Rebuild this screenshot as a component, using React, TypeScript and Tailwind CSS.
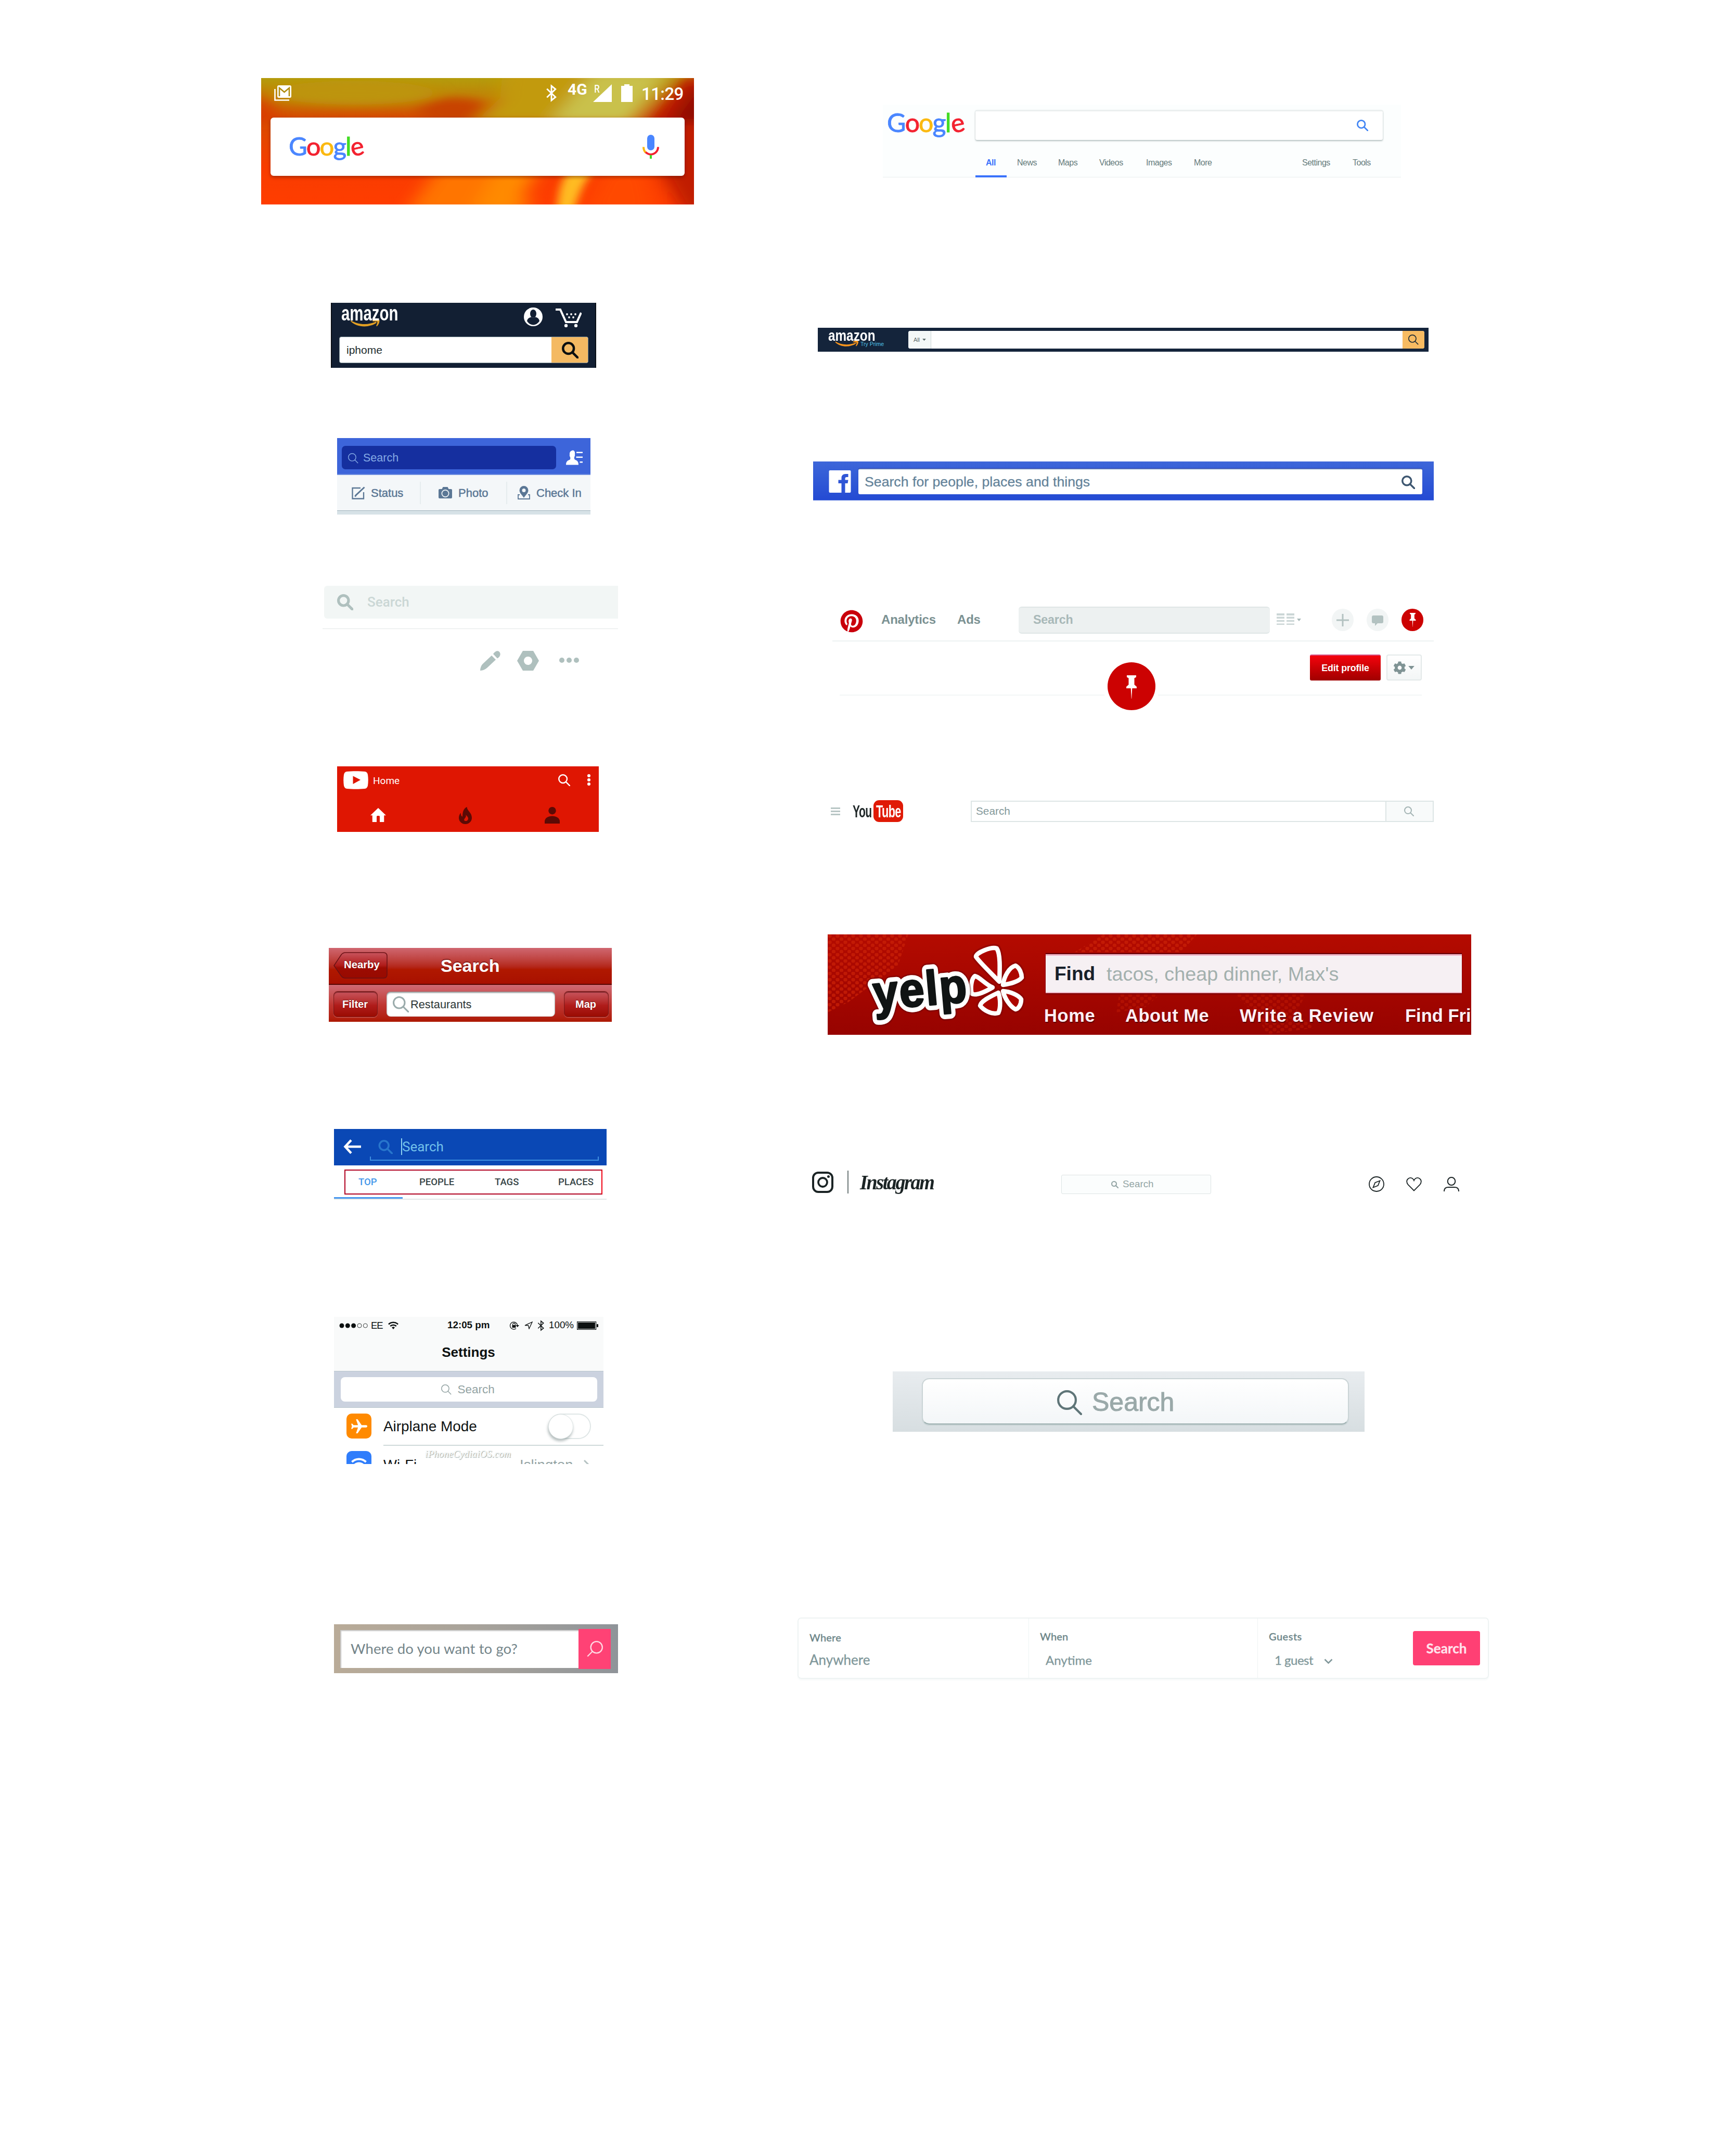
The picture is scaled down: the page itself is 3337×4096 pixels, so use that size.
import type { ReactNode } from "react";
import { FaPinterest, FaCog } from "react-icons/fa";

const SANS = "font-['Liberation_Sans',Arial,sans-serif]";

function Magnifier({ className, sw }: { className: string; sw: number }) {
  const r = 9.5 - sw / 2;
  const edge = 9.5 + r * 0.72;
  return (
    <svg viewBox="0 0 24 24" className={className} fill="none" stroke="currentColor" strokeWidth={sw}>
      <circle cx="9.5" cy="9.5" r={r} />
      <path d={`M${edge} ${edge}L23 23`} strokeLinecap={sw > 2 ? "round" : "butt"} />
    </svg>
  );
}

function Bluetooth({ className, sw }: { className: string; sw: number }) {
  return (
    <svg viewBox="0 0 20 33" className={className} fill="none" stroke="currentColor" strokeWidth={sw}>
      <path d="M2 8.500L18 24L10.500 30V3L18 9L2 24.500" />
    </svg>
  );
}

function GoogleLogo({ className }: { className: string }) {
  return (
    <div className={"flex font-['Lato',sans-serif] leading-none [-webkit-text-stroke-width:0.9px] " + className}>
      <span className="text-[#4a86ff]">G</span>
      <span className="text-[#f32230]">o</span>
      <span className="text-[#fbb910]">o</span>
      <span className="text-[#4a86ff]">g</span>
      <span className="text-[#42dc24]">l</span>
      <span className="inline-block -rotate-12 text-[#f32230]">e</span>
    </div>
  );
}

function Smile({ className }: { className: string }) {
  return (
    <svg viewBox="0 0 60 16" className={className} fill="currentColor">
      <path d="M1 2C15 11 36 12 52 4.500L53.500 7C38 17.500 13 17 0 3.500Z" />
      <path d="M45 2.500C50 0 56-.5 59 1C60 5 58 10 54 14L52.500 13C54 10 55.500 6 54.500 4.500C52 3.500 49 4 45.500 4Z" />
    </svg>
  );
}

function Pin({ className }: { className: string }) {
  return (
    <svg viewBox="0 0 22 45" className={className} fill="#fff">
      <path d="M2 0H20V3.500L16.500 5.500V18L21 22V25H1V22L5.500 18V5.500L2 3.500Z" />
      <path d="M9.700 25H12.300L11.200 45H10.800Z" />
    </svg>
  );
}

function Caret({ className }: { className: string }) {
  return (
    <svg viewBox="0 0 10 6" className={className} fill="currentColor">
      <path d="M0 0H10L5 6Z" />
    </svg>
  );
}

/* ---------- mobile column ---------- */

function GoogleMobile() {
  return (
    <section className="relative mt-[150px] ml-[502px] h-[243px] w-[832px] overflow-hidden bg-[#e24a00]">
      <svg viewBox="0 0 1539 945" preserveAspectRatio="none" className="absolute inset-0 h-full w-full">
        <defs>
          <linearGradient id="wall" x1="0" y1="0" x2="0" y2="1">
            <stop offset="0" stopColor="#b49c0c" />
            <stop offset=".14" stopColor="#bf8406" />
            <stop offset=".3" stopColor="#d44e00" />
            <stop offset=".7" stopColor="#f83c00" />
            <stop offset="1" stopColor="#ff3d00" />
          </linearGradient>
          <filter id="soft" x="-30%" y="-30%" width="160%" height="160%">
            <feGaussianBlur stdDeviation="34" />
          </filter>
          <filter id="softer" x="-50%" y="-50%" width="200%" height="200%">
            <feGaussianBlur stdDeviation="16" />
          </filter>
        </defs>
        <rect width="1539" height="945" fill="url(#wall)" />
        <g filter="url(#soft)">
          <ellipse cx="330" cy="110" rx="290" ry="90" fill="#bd9408" />
          <ellipse cx="690" cy="250" rx="130" ry="100" fill="#c84200" />
          <path d="M0 60L60 330H-60Z" fill="#da3a00" />
          <path d="M860-80H1480L1320 330H760L850 150Z" fill="#c29a10" />
          <path d="M1180-40H1440L1320 330H1030Z" fill="#c9c14c" />
          <path d="M1500-20L1620 0V1000H1500L1420 700L1350 330Z" fill="#c01c00" />
          <path d="M1539 60L1600 60V330H1450Z" fill="#8f0a00" />
          <path d="M520 1000L620 700H920L960 1000Z" fill="#ff7400" />
          <path d="M750 1000L830 700H980L900 1000Z" fill="#ff8a00" />
          <path d="M1150 1000L1220 700H1370L1400 1000Z" fill="#ff4a00" />
        </g>
        <path d="M1050 1000C1060 850 1060 800 1090 700H1180C1140 800 1130 880 1110 1000Z" fill="#ffbb20" filter="url(#softer)" />
      </svg>
      <div className="relative flex h-[76px] items-start text-white">
        <svg viewBox="0 0 33 30" className="mt-[14px] ml-[25px] h-[30px] w-[33px]" fill="none">
          <path d="M1.500 7V28.500H29" stroke="#fff" strokeWidth="2.600" />
          <rect x="6" y="0" width="27" height="24" rx="3" fill="#fff" />
          <path d="M10 21V5L19.500 13L29 5V21" stroke="#b08c10" strokeWidth="2.600" />
        </svg>
        <Bluetooth className="mt-[12px] ml-[489px] h-[34px] w-[21px]" sw={2.8} />
        <span className="mt-[7px] ml-[21px] w-[49px] font-['Roboto',sans-serif] text-[30px] leading-[29px] font-bold">4G</span>
        <div className="relative mt-[12px] h-[34px] w-[36px]">
          <svg viewBox="0 0 36 34" className="h-full w-full" fill="#fff">
            <path d="M36 0V34H0Z" />
          </svg>
          <span className="absolute -top-[1px] left-[2px] font-['Roboto',sans-serif] text-[20px] leading-[20px] font-medium tracking-[-1px]">
            <span className="inline-block origin-left scale-x-[0.85]">R</span>
          </span>
        </div>
        <svg viewBox="0 0 22 34" className="mt-[12px] ml-[18px] h-[34px] w-[22px]" fill="#fff">
          <path d="M6 0H16V3H22V34H0V3H6Z" />
        </svg>
        <span className="mt-[14px] ml-[17px] font-['Roboto',sans-serif] text-[33px] leading-[33px] font-medium tracking-[-0.6px]">11:29</span>
      </div>
      <div className="relative ml-[18px] flex h-[112px] w-[796px] items-center rounded-[6px] bg-white shadow-[0_3px_6px_rgba(80,20,0,0.45)]">
        <GoogleLogo className="mt-[-4px] ml-[35px] w-[680px] text-[49px] tracking-[-2px]" />
        <svg viewBox="0 0 32 46" className="h-[46px] w-[32px]" fill="none">
          <rect x="9" y="0" width="14" height="30" rx="7" fill="#4a86ff" />
          <path d="M2 23.500C2 28 3.500 31.500 6 34" stroke="#fbb910" strokeWidth="4" />
          <path d="M6 33.500C13 39.500 20 38.500 25 34.500C28.500 31.500 30 28 30 23.500" stroke="#f32230" strokeWidth="4" />
          <path d="M16 39V46" stroke="#42dc24" strokeWidth="4" />
        </svg>
      </div>
    </section>
  );
}

function AmazonMobile() {
  return (
    <section className="mt-[189px] ml-[636px] h-[125px] w-[510px] border-x-2 border-[#0a0f16] bg-[#121f33]">
      <div className="flex h-[65px] items-start">
        <div className="mt-[5px] ml-[18px] flex h-[46px] w-[350px] flex-col">
          <span className="h-[30px] w-[110px] origin-left scale-x-[0.735] text-[40px] leading-[30px] font-bold text-white">amazon</span>
          <Smile className="mt-[-3px] ml-[16px] h-[15px] w-[60px] text-[#e2a023]" />
        </div>
        <svg viewBox="0 0 36 36" className="mt-[9px] ml-[1px] h-[36px] w-[36px]">
          <circle cx="18" cy="18" r="18" fill="#fff" />
          <ellipse cx="18" cy="12" rx="6" ry="8" fill="#121f33" />
          <path d="M6 26C7 20 13 18.500 15 18.500C17 20.500 19 20.500 21 18.500C24 18.500 29 20 30 26C27 31 22 33.500 18 33.500S9 31 6 26Z" fill="#121f33" />
        </svg>
        <svg viewBox="0 0 50 37" className="mt-[10px] ml-[25px] h-[37px] w-[50px]" fill="none" stroke="#fff" strokeWidth="4">
          <path d="M0 3H9L20 27H41L49 9" />
          <g fill="#fff" stroke="none">
            <circle cx="20" cy="34" r="3.200" />
            <circle cx="39" cy="34" r="3.200" />
            <circle cx="22" cy="12" r="1.900" />
            <circle cx="30" cy="12" r="1.900" />
            <circle cx="38" cy="12" r="1.900" />
            <circle cx="26" cy="18" r="1.900" />
            <circle cx="34" cy="18" r="1.900" />
          </g>
        </svg>
      </div>
      <div className="ml-[14px] flex h-[51px] w-[479px] items-stretch overflow-hidden rounded-[4px] border border-[#7d9096] bg-white">
        <div className="flex w-[407px] items-center pl-[13px] text-[21px] text-[#1c2c2d]">iphome</div>
        <div className="flex w-[71px] items-center justify-center bg-[#f4b962]">
          <Magnifier className="ml-[0px] h-[32px] w-[32px] text-[#0c0f10]" sw={3.4} />
        </div>
      </div>
    </section>
  );
}

function FacebookAction({ icon, label, className }: { icon: ReactNode; label: string; className: string }) {
  return (
    <div className={"flex h-[43px] items-center text-[22px] text-[#5b7795] [-webkit-text-stroke:0.5px_#5b7795] " + className}>
      {icon}
      <span>{label}</span>
    </div>
  );
}

function FacebookMobile() {
  return (
    <section className="mt-[135px] ml-[648px] h-[147px] w-[487px] bg-[#f4f7f9]">
      <div className="flex h-[71px] items-start border-b-2 border-[#6d8ddf] bg-[#3d65da] pt-[15px]">
        <div className="ml-[9px] flex h-[45px] w-[412px] items-center rounded-[7px] bg-[#152f9f] pl-[12px] text-[#84a9e4]">
          <Magnifier className="mt-[2px] h-[20px] w-[20px]" sw={1.7} />
          <span className="mt-[1px] ml-[9px] text-[21.500px]">Search</span>
        </div>
        <svg viewBox="0 0 32 28" className="mt-[8px] ml-[19px] h-[29px] w-[32px]" fill="#fff">
          <path d="M13 0C17 .5 17.500 4 17 8.500C17.500 10 16.500 11.500 16 13C15.500 15 16 17 17 18C20.500 19.500 24 20.500 24 28H0C0 20.500 4 19.500 7.500 18C8.500 17 8.500 15 8 13C7 11.500 6.500 10 7 8.500C6.500 3 9 1 13 0Z" />
          <path d="M20 3H32V5.500H20ZM19.500 12H32V14.500H19.500ZM26.500 21.500H32V24H26.500Z" />
        </svg>
      </div>
      <div className="flex h-[68px] items-center">
        <FacebookAction
          className="w-[161px] border-r-2 border-[#e6ecee] pl-[28px]"
          label="Status"
          icon={
            <svg viewBox="0 0 26 25" className="mr-[11px] h-[25px] w-[26px]" fill="none" stroke="currentColor" strokeWidth="2.300">
              <path d="M17 3H1.500V23.500H23V11" />
              <path d="M24.500 1.500L8 17L6.500 19.500" strokeWidth="3" />
            </svg>
          }
        />
        <FacebookAction
          className="w-[166px] border-r-2 border-[#e6ecee] pl-[34px]"
          label="Photo"
          icon={
            <svg viewBox="0 0 26 22" className="mr-[12px] h-[22px] w-[26px]" fill="currentColor" stroke="none">
              <path fillRule="evenodd" d="M2 4H6.500L8.500 0H17.500L19.500 4H24A2 2 0 0 1 26 6V20A2 2 0 0 1 24 22H2A2 2 0 0 1 0 20V6A2 2 0 0 1 2 4ZM13 5A7.500 7.500 0 1 0 13 20A7.500 7.500 0 0 0 13 5Z" />
              <circle cx="13" cy="12.500" r="5.800" />
            </svg>
          }
        />
        <FacebookAction
          className="w-[155px] pl-[20px]"
          label="Check In"
          icon={
            <svg viewBox="0 0 24 26" className="mr-[12px] h-[26px] w-[24px]" fill="currentColor" stroke="none">
              <path fillRule="evenodd" d="M12 0A8.500 8.500 0 0 1 20.500 8.500C20.500 14 14.500 18 12 23C9.500 18 3.500 14 3.500 8.500A8.500 8.500 0 0 1 12 0ZM12 5A3.500 3.500 0 1 0 12 12A3.500 3.500 0 0 0 12 5Z" />
              <path d="M4 17H1V25H23V17H20" fill="none" stroke="currentColor" strokeWidth="1.800" />
            </svg>
          }
        />
      </div>
      <div className="h-[8px] border-t border-[#9fb3bb] bg-[#d7e2e7]" />
    </section>
  );
}

function PinterestMobile() {
  return (
    <section className="mt-[137px] ml-[620px] h-[164px] w-[568px] text-[#afc0be]">
      <div className="ml-[3px] flex h-[63px] items-center rounded-l-[6px] bg-[#f2f6f5]">
        <Magnifier className="ml-[25px] h-[31px] w-[31px]" sw={4} />
        <span className="ml-[27px] font-['Roboto',sans-serif] text-[26px] font-medium text-[#cbd7d5]">Search</span>
      </div>
      <div className="mt-[19px] h-px bg-[#e3e8e8]" />
      <div className="mt-[41px] flex h-[39px] items-center">
        <svg viewBox="0 0 39 38" className="ml-[303px] h-[38px] w-[39px]" fill="currentColor">
          <path d="M22 9L30 17L14 32C11 35 5 38 0 38C0 33 2 28 5 25Z" />
          <path d="M25 6C29 0 34-1 37 2C40 6 39 11 33 14.500Z" />
        </svg>
        <svg viewBox="0 0 42 38" className="ml-[32px] h-[38px] w-[42px]" fill="currentColor" fillRule="evenodd">
          <path d="M11 0H31L42 19L31 38H11L0 19ZM21 11A8 8 0 1 0 21 27A8 8 0 0 0 21 11Z" />
        </svg>
        <div className="mt-[-2px] ml-[39px] flex gap-[4px]">
          <i className="h-[10px] w-[10px] rounded-full bg-current" />
          <i className="h-[10px] w-[10px] rounded-full bg-current" />
          <i className="h-[10px] w-[10px] rounded-full bg-current" />
        </div>
      </div>
    </section>
  );
}

function YouTubeMobile() {
  return (
    <section className="mt-[183px] ml-[648px] h-[126px] w-[503px] bg-[#df1602] text-white">
      <div className="flex h-[52px] items-center">
        <svg viewBox="0 0 48 35" className="ml-[12px] h-[35px] w-[48px]">
          <path d="M7 1C17 0 31 0 41 1Q46 1.500 47 7Q48.500 17 47 28Q46 33.500 41 34C31 35 17 35 7 34Q2 33.500 1 28Q-.5 17 1 7Q2 1.500 7 1Z" fill="#fff" />
          <path d="M18.500 9.500L33 17L18.500 25Z" fill="#df1602" />
        </svg>
        <span className="mt-[5px] ml-[9px] w-[356px] font-['Roboto',sans-serif] text-[19px]">Home</span>
        <Magnifier className="ml-[0px] h-[23px] w-[23px]" sw={2.6} />
        <div className="ml-[33px] flex flex-col gap-[2px]">
          <i className="h-[6px] w-[6px] rounded-full bg-white" />
          <i className="h-[6px] w-[6px] rounded-full bg-white" />
          <i className="h-[6px] w-[6px] rounded-full bg-white" />
        </div>
      </div>
      <div className="flex h-[74px] items-start pt-[26px] text-[#5c0a05]">
        <svg viewBox="2 3 20 17" preserveAspectRatio="none" className="mt-[2px] ml-[64px] h-[27px] w-[30px] text-white" fill="currentColor">
          <path d="M10 20v-6.500q0-1 1-1h2q1 0 1 1V20h5.500v-8H22L12 3 2 12h2.500v8z" />
        </svg>
        <svg viewBox="4 0 16 22" preserveAspectRatio="none" className="ml-[140px] h-[33px] w-[25px]" fill="currentColor" fillRule="evenodd">
          <path d="M14 0C14 5 20 7 20 14A8 8 0 0 1 4 14C4 11.500 5 9 6.500 7.500C6.300 10 7 12 8.500 12.500C8.500 8 9 2.500 14 0ZM12.500 10C13.500 13 11.500 14 10.500 16C10.500 17.500 11 18 12 18C14 18.500 15.800 16.500 15.500 14.500C15.300 12.500 13.500 11.500 12.500 10Z" />
        </svg>
        <svg viewBox="0 0 29 32" className="ml-[140px] h-[32px] w-[29px]" fill="currentColor">
          <circle cx="14.500" cy="7.200" r="7.200" />
          <path d="M0 32V27C1 21 7 17.500 14.500 17.500S28 21 29 27V32Z" />
        </svg>
      </div>
    </section>
  );
}

const YELP_BTN =
  "flex items-center justify-center rounded-[8px] border border-[#7c1a1a] bg-linear-to-b from-[#c8545d] via-[#b01c1a] via-55% to-[#9a0b02] text-[20px] font-bold text-white shadow-[0_1px_1px_rgba(255,170,170,0.5),inset_0_2px_1px_rgba(60,0,0,0.5)] [text-shadow:0_-1px_1px_rgba(60,0,0,0.6)]";

function YelpMobile() {
  return (
    <section className="mt-[223px] ml-[632px] h-[142px] w-[544px]">
      <div className="flex h-[71px] items-start border-b-2 border-[#5a0500] bg-linear-to-b from-[#cf6670] via-[#b01800] via-60% to-[#a81000]">
        <div className="relative mt-[8px] ml-[9px] h-[51px] w-[104px]">
          <svg viewBox="0 0 104 51" className="absolute inset-0 h-full w-full">
            <defs>
              <linearGradient id="nearby" x1="0" y1="0" x2="0" y2="1">
                <stop offset="0" stopColor="#c8545d" />
                <stop offset=".5" stopColor="#b01c1a" />
                <stop offset=".6" stopColor="#9c0b02" />
                <stop offset="1" stopColor="#980a00" />
              </linearGradient>
            </defs>
            <path d="M1 26L15 5Q18 1 23 1H96Q103 1 103 8V43Q103 50 96 50H23Q18 50 15 46Z" fill="url(#nearby)" stroke="#6a1014" strokeWidth="1.500" />
          </svg>
          <span className="relative block pl-[20px] text-[20.300px] leading-[49px] font-bold text-white [text-shadow:0_-1px_1px_rgba(60,0,0,0.6)]">Nearby</span>
        </div>
        <span className="ml-[102px] text-[34px] leading-[69px] font-bold text-white [text-shadow:0_-2px_1px_rgba(80,0,0,0.5)]">Search</span>
      </div>
      <div className="flex h-[71px] items-start bg-linear-to-b from-[#cf6a74] via-[#bf3530] via-55% to-[#ad1800] pt-[12px]">
        <div className={"ml-[9px] h-[50px] w-[85px] pr-[2px] " + YELP_BTN}>Filter</div>
        <div className="mt-[1px] ml-[17px] flex h-[48px] w-[324px] items-center rounded-[8px] bg-white shadow-[inset_0_2px_3px_rgba(60,70,70,0.6),inset_0_0_2px_rgba(60,70,70,0.4)]">
          <Magnifier className="ml-[12px] h-[31px] w-[31px] text-[#9aabab]" sw={2.4} />
          <span className="mt-[2px] ml-[3px] text-[21.800px] text-[#2c3636]">Restaurants</span>
        </div>
        <div className={"ml-[17px] h-[50px] w-[86px] pr-[2px] " + YELP_BTN}>Map</div>
      </div>
    </section>
  );
}

function InstagramMobile() {
  return (
    <section className="mt-[206px] ml-[642px] h-[136px] w-[524px] bg-white">
      <div className="flex h-[70px] items-start bg-[#0a48b5]">
        <svg viewBox="0 0 34 28" className="mt-[20px] ml-[18px] h-[28px] w-[34px]" fill="none" stroke="#fff" strokeWidth="4.500">
          <path d="M34 14H4M15 1.500L3.500 14L15 26.500" />
        </svg>
        <div className="ml-[17px] flex h-[60px] w-[440px] flex-col">
          <div className="mt-[17px] flex h-[34px] items-center">
            <Magnifier className="ml-[16px] h-[27px] w-[28px] text-[#2876cc]" sw={3.2} />
            <i className="ml-[16px] h-[32px] w-[2px] bg-[#8ed2ef]" />
            <span className="font-['Roboto',sans-serif] text-[26px] leading-[34px] text-[#72c0ea]">Search</span>
          </div>
          <div className="mt-[2px] h-[8px] border-x-2 border-b-2 border-[#3f8fe0]" />
        </div>
      </div>
      <div className="mt-[8px] ml-[20px] flex h-[48px] w-[496px] items-center border-2 border-[#b00020] border-r-[#f00012] pt-[2px] font-['Roboto',sans-serif] text-[18.500px] font-medium text-[#364446]">
        <span className="ml-[25px] w-[117px] text-[#4497ea]">TOP</span>
        <span className="w-[145px]">PEOPLE</span>
        <span className="w-[122px]">TAGS</span>
        <span>PLACES</span>
      </div>
      <div className="mt-[5px] h-[3px] w-[132px] bg-[#4696ee]" />
      <div className="h-[2px] bg-[#e2e8e8]" />
    </section>
  );
}

function IosSettings() {
  return (
    <section className="mt-[225px] ml-[642px] h-[283px] w-[518px] overflow-hidden bg-white text-[#0d1111]">
      <div className="h-[104px] bg-[#f9fafa]">
        <div className="flex h-[33px] items-center">
          <svg viewBox="0 0 56 10" className="ml-[10px] h-[10px] w-[56px]" fill="currentColor">
            <circle cx="5" cy="5" r="4.500" />
            <circle cx="16.300" cy="5" r="4.500" />
            <circle cx="27.600" cy="5" r="4.500" />
            <circle cx="39" cy="5" r="4" fill="none" stroke="currentColor" strokeWidth=".8" />
            <circle cx="50.300" cy="5" r="4" fill="none" stroke="currentColor" strokeWidth=".8" />
          </svg>
          <span className="ml-[5px] w-[26px] text-[18.500px] tracking-[-1px]">EE</span>
          <svg viewBox="0 0 20 15" className="ml-[7px] h-[15px] w-[20px]" fill="none" stroke="currentColor" strokeWidth="2.600">
            <path d="M1 5.500C6 .5 14 .5 19 5.500M4.200 9C7.500 6 12.500 6 15.800 9" />
            <path d="M7 11.500Q10 9 13 11.500L10 15Z" fill="currentColor" stroke="none" />
          </svg>
          <span className="ml-[94px] w-[119px] text-[18.800px] font-bold">12:05 pm</span>
          <svg viewBox="0 0 19 16" className="h-[16px] w-[19px]" fill="none" stroke="currentColor" strokeWidth="1.300">
            <path d="M13 13.500A7 7 0 1 1 15.500 7" />
            <path d="M12.500 7H19L15.700 11Z" fill="currentColor" stroke="none" />
            <rect x="5.500" y="7" width="7" height="5" fill="currentColor" stroke="none" />
            <path d="M6.700 7V5.500A2.300 2.300 0 0 1 11.300 5.500V7" />
          </svg>
          <svg viewBox="0 0 16 15" className="ml-[10px] h-[15px] w-[16px]" fill="none" stroke="currentColor" strokeWidth="1.300">
            <path d="M15 1L1 7.500H7.500L9 14Z" />
          </svg>
          <Bluetooth className="ml-[9px] h-[22px] w-[13px]" sw={2.4} />
          <span className="ml-[9px] w-[54px] text-[18.800px]">100%</span>
          <svg viewBox="0 0 41 16" className="h-[16px] w-[41px]">
            <rect x=".6" y=".6" width="36" height="14.800" fill="none" stroke="currentColor" strokeWidth="1.200" />
            <rect x="2" y="2" width="33" height="12" fill="currentColor" />
            <rect x="38" y="5" width="3" height="6" rx="1" fill="currentColor" />
          </svg>
        </div>
        <div className="flex h-[70px] items-center justify-center pr-[1px] text-[26px] font-bold">Settings</div>
      </div>
      <div className="flex h-[71px] items-center justify-center border-y border-[#b9c6cc] bg-[#cbd2df]">
        <div className="flex h-[47px] w-[493px] items-center rounded-[8px] bg-white text-[22.500px] text-[#93a3a3]">
          <Magnifier className="ml-[193px] h-[20px] w-[20px]" sw={1.8} />
          <span className="ml-[12px]">Search</span>
        </div>
      </div>
      <div className="relative flex">
        <div className="w-[95px] pl-[24px]">
          <div className="mt-[11px] flex h-[48px] w-[48px] items-center justify-center rounded-[10px] bg-[#ff8a00]">
            <svg viewBox="2 2 19 20" preserveAspectRatio="none" className="h-[31px] w-[27px] rotate-90" fill="#fff">
              <path d="M21 16v-2l-8-5V3.500c0-.83-.67-1.500-1.500-1.500S10 2.670 10 3.500V9l-8 5v2l8-2.500V19l-2 1.500V22l3.500-1 3.500 1v-1.500L13 19v-5.500l8 2.500z" />
            </svg>
          </div>
          <div className="mt-[24px] flex h-[48px] w-[48px] items-start justify-center rounded-[10px] bg-[#2f7dfb] pt-[13px]">
            <svg viewBox="0 0 30 22" className="h-[22px] w-[30px]" fill="none" stroke="#fff" strokeWidth="4">
              <path d="M1.500 8C9 .5 21 .5 28.500 8M7 13.500C11.500 9.500 18.500 9.500 23 13.500" />
              <circle cx="15" cy="19" r="2" fill="#fff" stroke="none" />
            </svg>
          </div>
        </div>
        <div className="w-[423px]">
          <div className="flex h-[73px] items-center border-b-2 border-[#cfdada]">
            <span className="w-[317px] text-[27.900px]">Airplane Mode</span>
            <div className="h-[49px] w-[82px] rounded-full border-2 border-[#dfe6e6] bg-white">
              <div className="-mt-[1px] -ml-[2px] h-[48px] w-[48px] rounded-full border border-[#dde4e4] bg-white shadow-[-1px_4px_5px_rgba(90,110,110,0.45)]" />
            </div>
          </div>
          <div className="mt-[21px] flex h-[32px] items-center text-[27.500px]">
            <span className="w-[262px]">Wi-Fi</span>
            <span className="w-[123px] text-[#93a3a3]">Islington</span>
            <svg viewBox="0 0 12 20" className="h-[22px] w-[12px]" fill="none" stroke="#b5c2c2" strokeWidth="3">
              <path d="M1 1L10 10L1 19" />
            </svg>
          </div>
        </div>
        <span className="absolute top-[79px] left-[175px] font-['Liberation_Serif',serif] text-[18.500px] leading-[20px] text-white italic tracking-[0.3px] [text-shadow:1px_1px_1px_#8fa0a0,0_0_1px_#c3cfcf]">
          iPhoneCydiaiOS.com
        </span>
      </div>
    </section>
  );
}

function AirbnbMobile() {
  return (
    <section className="mt-[308px] ml-[642px] flex h-[94px] w-[546px] items-center bg-linear-to-r from-[#b9ab98] via-[#a8a39b] to-[#8f9499] pl-[12px]">
      <div className="flex h-[73px] w-[458px] items-center bg-white pl-[20px] font-['Lato',sans-serif] text-[27.500px] tracking-[0.1px] text-[#74858a] shadow-[inset_2px_2px_2px_rgba(90,90,90,0.35)]">
        Where do you want to go?
      </div>
      <div className="flex h-[77px] w-[62px] items-center justify-center bg-[#ff4275]">
        <Magnifier className="h-[31px] w-[31px] -scale-x-100 text-[#ffd9e3]" sw={1.8} />
      </div>
    </section>
  );
}

/* ---------- desktop column ---------- */

function GoogleDesktop() {
  return (
    <section className="mt-[201px] ml-[297px] h-[140px] w-[996px] border-b border-[#e8eeee] bg-[#fcfefe]">
      <div className="flex h-[79px] items-start">
        <GoogleLogo className="mt-[9px] ml-[8px] w-[170px] text-[50px] tracking-[-1.900px]" />
        <div className="mt-[11px] flex h-[57px] w-[783px] items-center rounded-[3px] border-t-2 border-[#eaeeee] bg-white shadow-[0_2px_3px_rgba(120,140,140,0.5),0_0_2px_rgba(120,140,140,0.3)]">
          <Magnifier className="mt-[-1px] ml-[733px] h-[22px] w-[22px] text-[#4285f4]" sw={3} />
        </div>
      </div>
      <div className="ml-[178px] flex h-[61px] items-stretch text-[16px] leading-[65px] tracking-[-0.5px] text-[#667c7c]">
        <span className="w-[60px] border-b-[4px] border-[#3a72fb] pl-[20px] font-bold text-[#3a72fb]">All</span>
        <span className="w-[79px] pl-[20px]">News</span>
        <span className="w-[79px] pl-[20px]">Maps</span>
        <span className="w-[90px] pl-[20px]">Videos</span>
        <span className="w-[92px] pl-[20px]">Images</span>
        <span className="w-[208px] pl-[20px]">More</span>
        <span className="w-[97px] pl-[20px]">Settings</span>
        <span className="pl-[20px]">Tools</span>
      </div>
    </section>
  );
}

function AmazonDesktop() {
  return (
    <section className="mt-[289px] ml-[172px] flex h-[46px] w-[1174px] items-start bg-[#14243b]">
      <div className="ml-[20px] w-[154px]">
        <div className="mt-[3px] h-[22px] w-[91px] origin-left scale-x-[0.81] text-[30px] leading-[23px] font-bold text-white">amazon</div>
        <div className="flex items-start">
          <Smile className="ml-[12px] h-[12px] w-[48px] text-[#f7951d]" />
          <span className="ml-[2px] text-[10.500px] leading-[12px] text-[#4fc0e8]">Try Prime</span>
        </div>
      </div>
      <div className="mt-[6px] flex h-[34px] w-[992px] items-stretch overflow-hidden rounded-[4px] bg-white">
        <div className="flex w-[44px] items-center border-r border-[#cdd6d6] bg-[#f4f8f8] pl-[10px] text-[#5c6b6b]">
          <span className="w-[17px] text-[11px] tracking-[-0.2px]">All</span>
          <Caret className="h-[4px] w-[7px]" />
        </div>
        <div className="w-[906px]" />
        <div className="flex w-[42px] items-center justify-center bg-[#f7bb62]">
          <Magnifier className="h-[20px] w-[20px] text-[#1c2b36]" sw={2} />
        </div>
      </div>
    </section>
  );
}

function FacebookDesktop() {
  return (
    <section className="mt-[211px] ml-[163px] flex h-[75px] w-[1193px] items-start border-b border-[#5f7fe0] bg-linear-to-b from-[#3d66d9] to-[#244ad3]">
      <svg viewBox="0 0 42 43" className="mt-[17px] ml-[30px] h-[43px] w-[43px]">
        <rect width="42" height="43" rx="2" fill="#fff" />
        <path d="M24 43V25H18V18.500H24V15Q24 7 32 7H37V13H34Q31 13 31 16V18.500H37L36 25H31V43Z" fill="#2f55d6" />
      </svg>
      <div className="mt-[14px] ml-[14px] flex h-[49px] w-[1084px] items-center rounded-[3px] border-t-2 border-[#b9cbe0] bg-white shadow-[0_-1px_1px_#1a2f9c]">
        <span className="mt-[-1px] ml-[12px] w-[1032px] text-[26.700px] text-[#64839a] [-webkit-text-stroke:0.3px_#64839a]">Search for people, places and things</span>
        <Magnifier className="h-[26px] w-[26px] text-[#3d5670]" sw={3.2} />
      </div>
    </section>
  );
}

function PinterestDesktop() {
  return (
    <section className="relative mt-[204px] ml-[200px] h-[200px] w-[1156px]">
      <div className="flex h-[67px] items-start border-b-2 border-[#edf1f1] text-[24px] font-bold tracking-[-0.2px] text-[#7b9192]">
        <FaPinterest className="mt-[6px] ml-[15px] h-[44px] w-[44px] text-[#c9000b]" />
        <span className="ml-[35px] w-[146px] leading-[50px]">Analytics</span>
        <span className="w-[118px] leading-[50px]">Ads</span>
        <div className="h-[52px] w-[483px] rounded-[6px] border-y-2 border-[#dfe6e6] bg-[#edf1f1] pl-[28px] text-[23.300px] leading-[47px] text-[#a8b8b8]">Search</div>
        <svg viewBox="0 0 48 24" className="mt-[13px] ml-[13px] h-[24px] w-[48px]" fill="#cbd6d6">
          <path d="M0 0H15V4H0ZM19 0H34V4H19ZM0 6.500H15V10H0ZM19 6.500H34V10H19ZM0 13H15V16H0ZM19 13H34V16H19ZM0 19.500H15V22H0ZM19 19.500H34V22H19Z" />
          <path d="M39 10H47L43 15Z" fill="#a8b8b8" />
        </svg>
        <div className="mt-[4px] ml-[58px] flex h-[43px] w-[42px] items-center justify-center rounded-full bg-[#f2f5f5]">
          <svg viewBox="0 0 24 24" className="h-[24px] w-[24px]" stroke="#b3c2c1" strokeWidth="3">
            <path d="M12 0V24M0 12H24" />
          </svg>
        </div>
        <div className="mt-[4px] ml-[25px] flex h-[43px] w-[42px] items-center justify-center rounded-full bg-[#f2f5f5]">
          <svg viewBox="0 0 22 20" className="mt-[3px] h-[20px] w-[22px]" fill="#b3c2c1">
            <path d="M3 0H19Q22 0 22 3V12Q22 15 19 15H11L6 20V15H3Q0 15 0 12V3Q0 0 3 0Z" />
          </svg>
        </div>
        <div className="mt-[4px] ml-[25px] flex h-[43px] w-[42px] items-center justify-center rounded-full bg-[#cc0202]">
          <Pin className="h-[27px] w-[15px]" />
        </div>
      </div>
      <div className="mt-[25px] flex h-[50px] items-stretch pl-[918px]">
        <div className="flex w-[136px] items-center justify-center rounded-[3px] border-t-2 border-[#d5588a] bg-linear-to-b from-[#f5030d] to-[#a00000] text-[17.800px] font-bold tracking-[-0.1px] text-white">Edit profile</div>
        <div className="ml-[11px] flex w-[68px] items-center rounded-[4px] border-2 border-[#e3e9e9] bg-linear-to-b from-white to-[#f3f6f6] text-[#7f9394]">
          <FaCog className="ml-[11px] h-[25px] w-[25px]" />
          <Caret className="ml-[4px] h-[7px] w-[12px]" />
        </div>
      </div>
      <div className="mt-[27px] ml-[14px] h-[2px] w-[1119px] bg-[#f2f6f6]" />
      <div className="absolute top-[98px] left-[520px] flex h-[109px] w-[109px] items-center justify-center rounded-full bg-white">
        <div className="flex h-[92px] w-[92px] items-center justify-center rounded-full bg-[#cc0202]">
          <Pin className="mt-[4px] h-[45px] w-[22px]" />
        </div>
      </div>
    </section>
  );
}

function YouTubeDesktop() {
  return (
    <section className="mt-[172px] ml-[197px] flex h-[42px] w-[1158px] items-center">
      <div className="flex w-[18px] flex-col gap-[3px]">
        <i className="h-[3px] bg-[#b8c6c5]" />
        <i className="h-[3px] bg-[#b8c6c5]" />
        <i className="h-[3px] bg-[#b8c6c5]" />
      </div>
      <span className="ml-[24px] w-[40px] origin-left scale-x-[0.62] text-[34px] leading-[42px] font-bold tracking-[-1px] text-[#1e2627]">You</span>
      <div className="flex h-[42px] w-[57px] items-center rounded-[11px] bg-[#e01a06] pl-[5px]">
        <span className="origin-left scale-x-[0.64] text-[34px] leading-[42px] font-bold tracking-[-1px] text-white">Tube</span>
      </div>
      <div className="ml-[130px] flex h-[41px] w-[890px] items-stretch border-2 border-[#dde5e5]">
        <div className="flex w-[797px] items-center border-r-2 border-[#dde5e5] pl-[8px] text-[20.800px] text-[#84989a]">Search</div>
        <div className="flex w-[89px] items-center justify-center bg-[#f8fafa]">
          <Magnifier className="mr-[2px] h-[19px] w-[19px] text-[#a5b5b5]" sw={2.6} />
        </div>
      </div>
    </section>
  );
}

const PETALS = [
  "M251 76C240 64 214 40 206 28C206 20 236 8 246 12C253 22 252 50 251 76Z",
  "M258 82C260 66 270 48 282 45C290 49 294 60 294 68C287 77 270 80 258 82Z",
  "M258 94C272 95 289 102 293 110C293 120 288 128 282 129C272 124 261 108 258 94Z",
  "M249 97C253 108 254 126 249 136C236 140 220 130 214 122C216 112 237 103 249 97Z",
  "M238 87C224 81 212 66 204 65C197 70 195 88 198 99C206 104 226 94 238 87Z",
];

function YelpDesktop() {
  return (
    <section className="relative mt-[216px] ml-[191px] h-[193px] w-[1237px] overflow-hidden bg-linear-to-b from-[#b40b00] to-[#970300]">
      <svg viewBox="0 0 1237 193" className="absolute inset-0 h-full w-full">
        <defs>
          <pattern id="dots" width="15" height="12" patternUnits="userSpaceOnUse">
            <circle cx="4" cy="3" r="3.600" fill="#c81f06" />
            <circle cx="11.500" cy="9" r="3.600" fill="#c81f06" />
          </pattern>
        </defs>
        <path d="M0 0H155L135 60L80 100L40 130L0 150Z" fill="url(#dots)" opacity=".75" />
        <path d="M530 0H710L680 34H475Z" fill="url(#dots)" opacity=".75" />
        <path d="M560 115H640L610 140L555 150ZM780 115H920L900 150L935 180L845 192L820 150Z" fill="url(#dots)" opacity=".4" />
      </svg>
      <div className="relative flex items-start">
        <svg viewBox="0 0 310 165" className="mt-[15px] ml-[79px] h-[165px] w-[310px] overflow-visible">
          <g fill="#ad0600" strokeLinejoin="round">
            {PETALS.map((d) => (
              <path key={d + "s"} d={d} stroke="#6d0300" strokeWidth="15" opacity=".35" />
            ))}
            {PETALS.map((d) => (
              <path key={d} d={d} stroke="#fff" strokeWidth="8.500" />
            ))}
          </g>
          <g transform="translate(11 130) rotate(-5) scale(1 1.08)" fontFamily="'Liberation Sans', Arial, sans-serif" fontWeight="700" fontSize="86" strokeLinejoin="round">
            <text fill="#5a0300" stroke="#5a0300" strokeWidth="24" opacity=".4" textLength="180">yelp</text>
            <text fill="#fff" stroke="#fff" strokeWidth="19" textLength="180">yelp</text>
            <text fill="#101414" stroke="#101414" strokeWidth="3" textLength="180">yelp</text>
          </g>
        </svg>
        <div className="mt-[38px] ml-[30px] w-[817px]">
          <div className="flex h-[75px] w-[800px] items-center border-t-[3px] border-b-2 border-[#eeb4c6] bg-[#f6f0f3] shadow-[0_-2px_1px_#6a0208,0_2px_2px_#7a0200]">
            <span className="ml-[17px] w-[100px] text-[37px] font-bold text-[#18202a]">Find</span>
            <span className="text-[37.800px] text-[#a3b0ae]">tacos, cheap dinner, Max&apos;s</span>
          </div>
          <div className="mt-[23px] flex text-[34.500px] leading-[40px] font-bold text-[#ffeef4] [text-shadow:1px_2px_1px_#5a0200]">
            <span className="-ml-[3px] w-[156px] tracking-[0.6px]">Home</span>
            <span className="w-[220px] tracking-[0.5px]">About Me</span>
            <span className="w-[318px] tracking-[1.100px]">Write a Review</span>
            <span>Find Friends</span>
          </div>
        </div>
      </div>
    </section>
  );
}

function InstagramDesktop() {
  return (
    <section className="mt-[261px] ml-[161px] flex h-[44px] w-[1246px] items-start text-[#1b2425]">
      <svg viewBox="0 0 41 41" className="mt-[2px] h-[41px] w-[41px]" fill="none" stroke="currentColor" strokeWidth="4">
        <rect x="2" y="2" width="37" height="37" rx="10" />
        <circle cx="20.500" cy="20.500" r="8.500" strokeWidth="3.800" />
        <circle cx="31.500" cy="9.500" r="2.500" fill="currentColor" stroke="none" />
      </svg>
      <i className="ml-[27px] h-[44px] w-[2px] bg-[#6d7878]" />
      <span className="ml-[22px] w-[387px] origin-left scale-x-[0.93] font-['Liberation_Serif',serif] text-[41px] leading-[44px] font-bold tracking-[-2.600px] italic">Instagram</span>
      <div className="mt-[8px] flex h-[37px] w-[288px] items-center rounded-[3px] border-[1.500px] border-[#dde4e4] bg-[#fbfdfd] text-[#94a5a5]">
        <Magnifier className="ml-[95px] h-[14px] w-[14px]" sw={3.6} />
        <span className="ml-[8px] text-[18.800px]">Search</span>
      </div>
      <svg viewBox="0 0 30 30" className="mt-[11px] ml-[303px] h-[30px] w-[30px]" fill="none" stroke="currentColor" strokeWidth="1.800">
        <circle cx="15" cy="15" r="14" />
        <path d="M21.500 8.500L17.800 17.800L8.500 21.500L12.200 12.200Z" />
      </svg>
      <svg viewBox="0 0 30 27" className="mt-[13px] ml-[42px] h-[27px] w-[30px]" fill="none" stroke="currentColor" strokeWidth="1.800">
        <path d="M15 25.500L4 14.500C0 10 .5 5 4 2.500C8-.5 13 1 15 6C17 1 22-.5 26 2.500C29.500 5 30 10 26 14.500Z" />
      </svg>
      <svg viewBox="0 0 30 28" className="mt-[12px] ml-[42px] h-[28px] w-[30px]" fill="none" stroke="currentColor" strokeWidth="2">
        <ellipse cx="15" cy="8.500" rx="7.300" ry="7.500" />
        <path d="M1 28C1 22 4 20 9 20H21C26 20 29 22 29 28" />
      </svg>
    </section>
  );
}

function MacSearch() {
  return (
    <section className="mt-[342px] ml-[316px] h-[116px] w-[907px] bg-linear-to-b from-[#e8ecef] to-[#d7dee1] pt-[13px]">
      <div className="ml-[56px] flex h-[89px] w-[821px] items-center rounded-[14px] border-2 border-[#cad4d6] border-b-[#9db0b0] bg-linear-to-b from-white to-[#f3f6f8] shadow-[0_2px_1px_#c6d1d3]">
        <Magnifier className="mt-[4px] ml-[258px] h-[48px] w-[48px] text-[#5f7578]" sw={2.1} />
        <span className="mt-[4px] ml-[19px] text-[50px] text-[#9aa9a9] [-webkit-text-stroke:1px_#9aa9a9]">Search</span>
      </div>
    </section>
  );
}

function AirbnbDesktop() {
  return (
    <section className="mt-[357px] ml-[133px] flex h-[118px] w-[1329px] items-stretch rounded-[7px] border-2 border-[#eef3f3] font-['Lato',sans-serif] text-[#80979a] shadow-[0_3px_3px_#f8fafa] [-webkit-text-stroke-width:0.3px]">
      <div className="w-[443px] border-r-[1.500px] border-[#eef3f3] pt-[21px] pl-[21px]">
        <div className="text-[20px] leading-[30px] font-medium tracking-[0.2px] text-[#6d8689]">Where</div>
        <div className="mt-[13px] text-[26px] leading-[30px]">Anywhere</div>
      </div>
      <div className="w-[440px] border-r-[1.500px] border-[#eef3f3] pt-[19px] pl-[21px]">
        <div className="text-[20px] leading-[30px] font-medium tracking-[0.2px] text-[#6d8689]">When</div>
        <div className="mt-[16px] pl-[11px] text-[24px] leading-[30px]">Anytime</div>
      </div>
      <div className="w-[298px] pt-[19px] pl-[21px]">
        <div className="text-[20px] leading-[30px] font-medium tracking-[0.5px] text-[#6d8689]">Guests</div>
        <div className="mt-[16px] flex items-center pl-[11px] text-[24px] leading-[30px]">
          <span className="w-[95px] tracking-[-0.5px]">1 guest</span>
          <svg viewBox="0 0 17 10" className="mt-[3px] h-[10px] w-[17px]" fill="none" stroke="currentColor" strokeWidth="2.600">
            <path d="M1.500 1.500L8.500 8.500L15.500 1.500" />
          </svg>
        </div>
      </div>
      <div className="mt-[24px] flex h-[66px] w-[129px] items-center justify-center rounded-[4px] bg-[#ff4074] text-[26px] font-bold text-[#ffe3ec]">Search</div>
    </section>
  );
}

export default function App() {
  return (
    <main className={"flex h-[4096px] w-[3337px] overflow-hidden bg-white whitespace-nowrap [&_*]:shrink-0 " + SANS}>
      <div className="flex w-[1400px] flex-col">
        <GoogleMobile />
        <AmazonMobile />
        <FacebookMobile />
        <PinterestMobile />
        <YouTubeMobile />
        <YelpMobile />
        <InstagramMobile />
        <IosSettings />
        <AirbnbMobile />
      </div>
      <div className="flex w-[1937px] flex-col">
        <GoogleDesktop />
        <AmazonDesktop />
        <FacebookDesktop />
        <PinterestDesktop />
        <YouTubeDesktop />
        <YelpDesktop />
        <InstagramDesktop />
        <MacSearch />
        <AirbnbDesktop />
      </div>
    </main>
  );
}
